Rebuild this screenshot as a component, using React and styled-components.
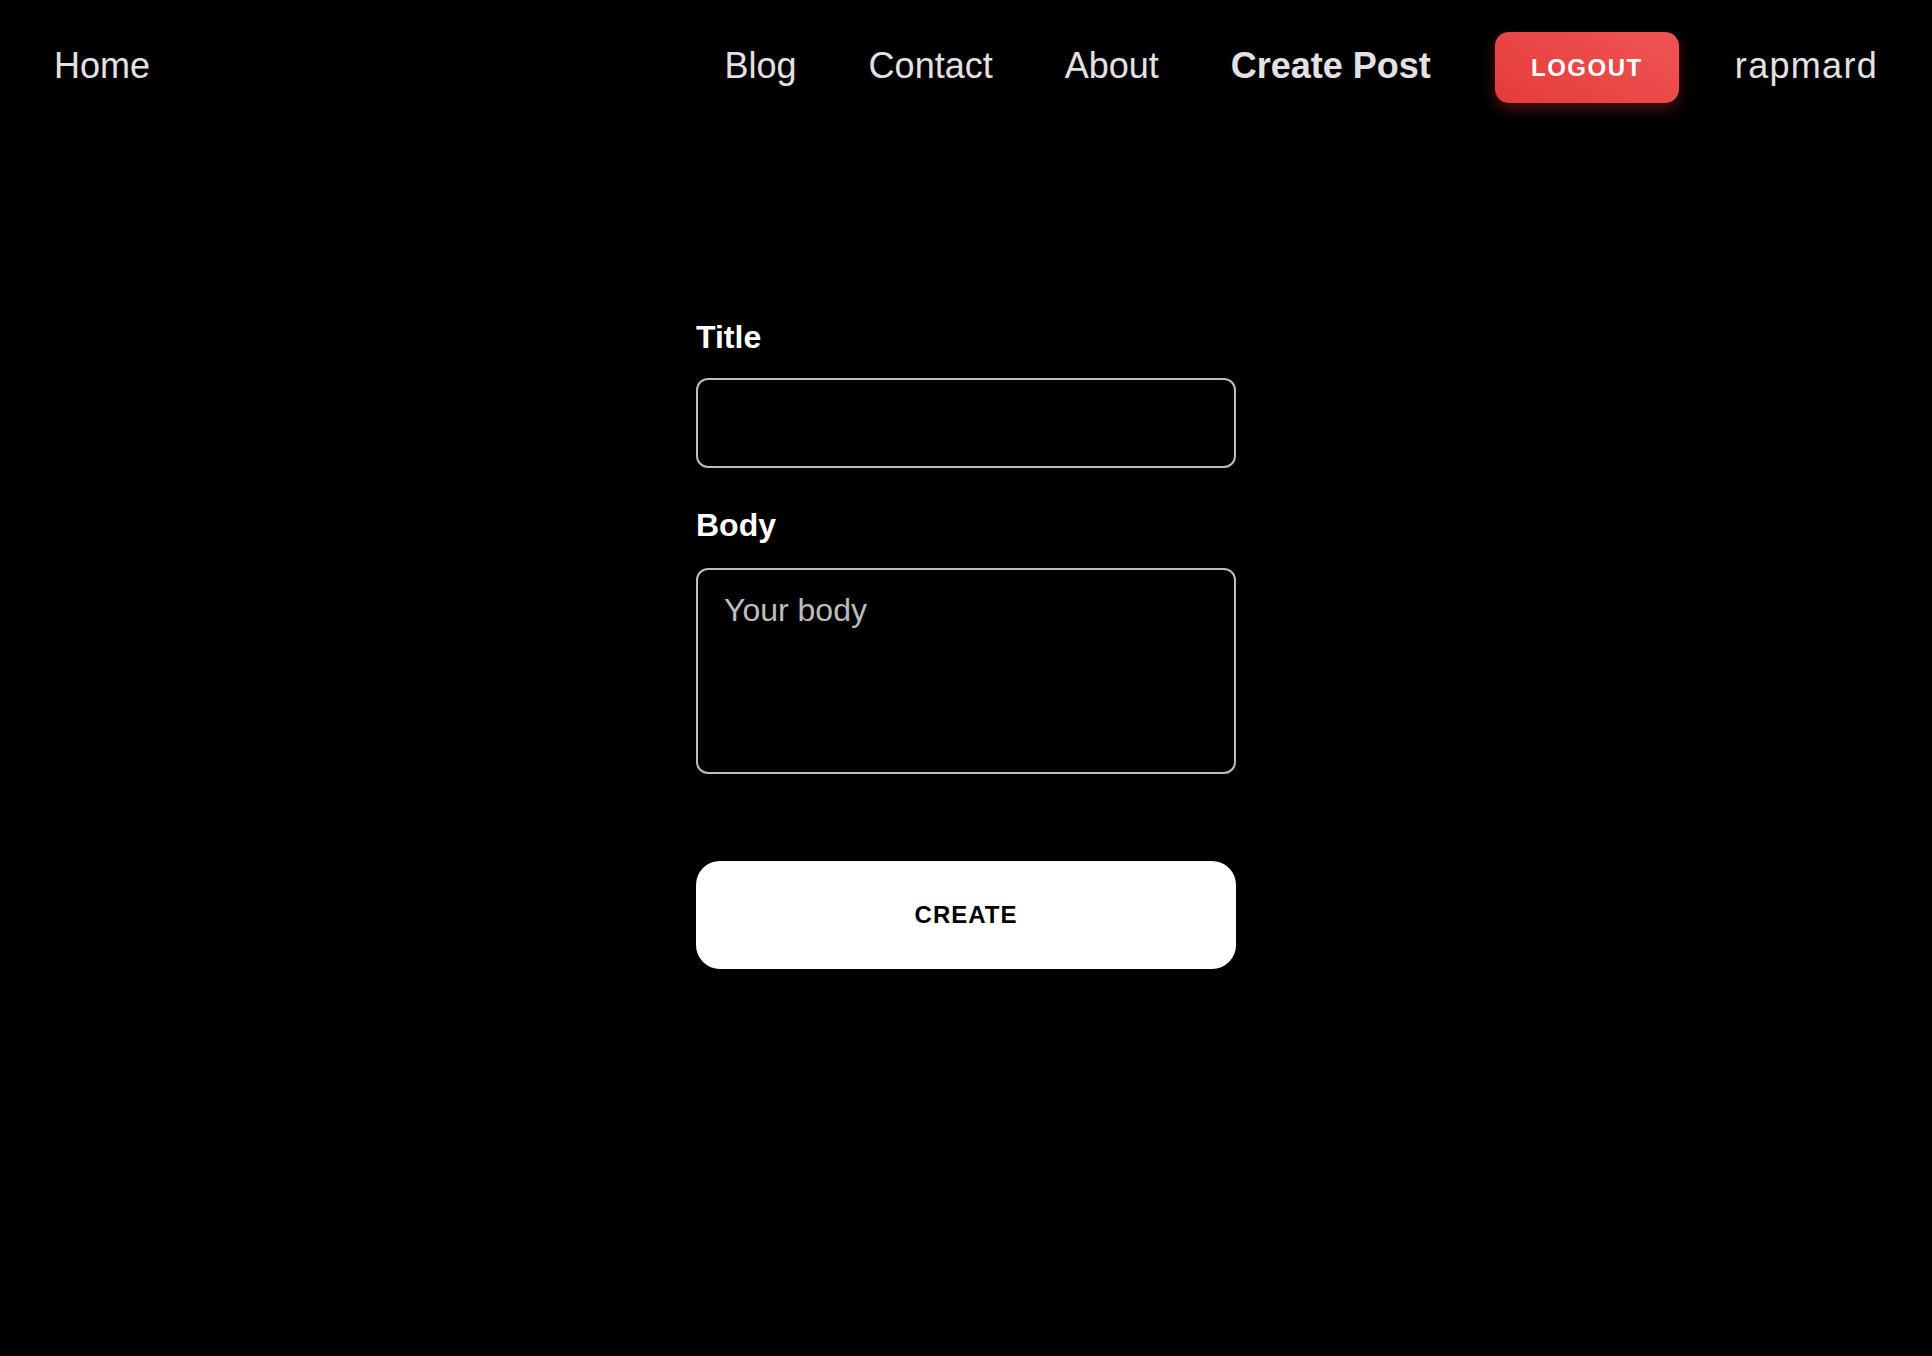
import React from 'react';
import styled, {createGlobalStyle} from 'styled-components';

const GlobalStyle = createGlobalStyle`
  html, body {
    margin: 0;
    padding: 0;
    background: #000;
  }
  body {
    font-family: "Liberation Sans", Arial, sans-serif;
    color: #fff;
  }
  * {
    box-sizing: border-box;
  }
`;

const StyledPage = styled.div`
  min-height: 1356px;
  background: #000;
`;

const StyledNav = styled.nav`
  display: flex;
  align-items: center;
  height: 132px;
  padding: 0 54px 0 54px;
`;

const StyledNavLink = styled.a`
  font-size: 36px;
  line-height: 1;
  color: #e2e2e2;
  text-decoration: none;
  font-weight: ${(props) => (props.active ? 700 : 400)};
  margin-left: ${(props) => props.offset || 0}px;
  cursor: pointer;
`;

const StyledSpacer = styled.div`
  flex: 1;
`;

const StyledLogout = styled.button`
  margin: 3px 0 0 64px;
  width: 184px;
  height: 71px;
  border: none;
  border-radius: 14px;
  background: linear-gradient(30deg, #e53b3b 0%, #f05454 100%);
  box-shadow: 0 6px 14px rgba(220, 50, 50, 0.35);
  color: #fff;
  font-family: "Liberation Sans", Arial, sans-serif;
  font-size: 24px;
  font-weight: 700;
  letter-spacing: 1.5px;
  cursor: pointer;
`;

const StyledUser = styled.span`
  margin-left: 56px;
  font-size: 36px;
  line-height: 1;
  color: #e2e2e2;
  letter-spacing: 1.3px;
`;

const StyledForm = styled.form`
  width: 540px;
  margin: 189px auto 0;
  display: flex;
  flex-direction: column;
`;

const StyledLabel = styled.label`
  font-size: 32px;
  line-height: 1;
  font-weight: 700;
  color: #fff;
  margin: ${(props) => (props.first ? '0 0 25px' : '41px 0 27px')};
`;

const StyledInput = styled.input`
  height: 90px;
  width: 100%;
  background: #000;
  border: 2px solid #b3bec6;
  border-radius: 12px;
  padding: 0 26px;
  font-family: "Liberation Sans", Arial, sans-serif;
  font-size: 32px;
  color: #fff;
  outline: none;
`;

const StyledTextarea = styled.textarea`
  height: 206px;
  width: 100%;
  background: #000;
  border: 2px solid #b3bec6;
  border-radius: 12px;
  padding: 22px 26px;
  font-family: "Liberation Sans", Arial, sans-serif;
  font-size: 32px;
  line-height: 1.15;
  color: #fff;
  resize: none;
  outline: none;

  &::placeholder {
    color: #bdbdbd;
  }
`;

const StyledCreate = styled.button`
  margin-top: 87px;
  height: 108px;
  width: 100%;
  border: none;
  border-radius: 24px;
  background: #fff;
  color: #000;
  font-family: "Liberation Sans", Arial, sans-serif;
  font-size: 24px;
  font-weight: 700;
  letter-spacing: 1px;
  cursor: pointer;
`;

const App = () => (
  <StyledPage>
    <GlobalStyle />
    <StyledNav>
      <StyledNavLink>Home</StyledNavLink>
      <StyledSpacer />
      <StyledNavLink>Blog</StyledNavLink>
      <StyledNavLink offset={72}>Contact</StyledNavLink>
      <StyledNavLink offset={72}>About</StyledNavLink>
      <StyledNavLink offset={72} active>Create Post</StyledNavLink>
      <StyledLogout>LOGOUT</StyledLogout>
      <StyledUser>rapmard</StyledUser>
    </StyledNav>

    <StyledForm onSubmit={(e) => e.preventDefault()}>
      <StyledLabel first>Title</StyledLabel>
      <StyledInput type="text" />
      <StyledLabel>Body</StyledLabel>
      <StyledTextarea placeholder="Your body" />
      <StyledCreate type="submit">CREATE</StyledCreate>
    </StyledForm>
  </StyledPage>
);

export default App;
